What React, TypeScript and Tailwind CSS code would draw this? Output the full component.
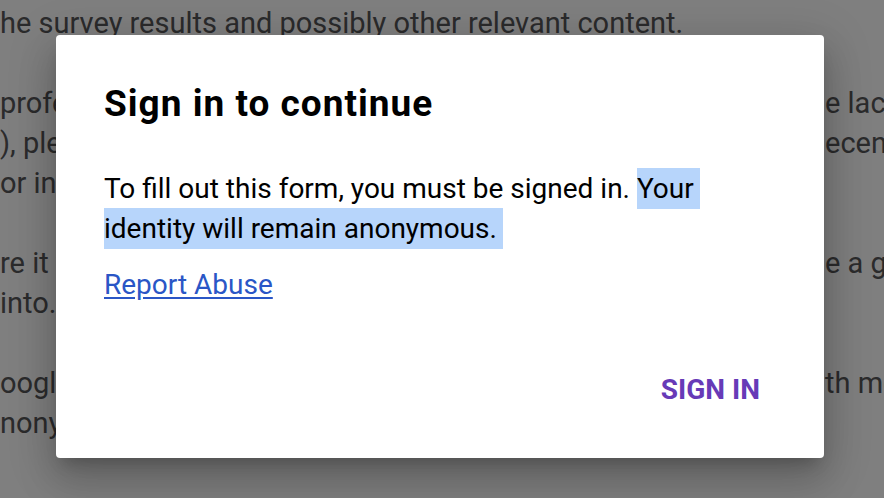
import React from "react";

const lines: { left: string; right?: string }[][] = [
  [{ left: "he survey results and possibly other relevant content." }],
  [
    { left: "professional background in survey design, we would like", right: "e lack of" },
    { left: "), please let us know so that we can take it into account", right: "ecent" },
    { left: "or in any related field." },
  ],
  [
    { left: "re it will be shared with the whole team so they can", right: "e a good" },
    { left: "into." },
  ],
  [
    { left: "oogle Forms does not collect your email address along", right: "th more" },
    { left: "nonymous." },
  ],
];

export default function App() {
  return (
    <div className="relative h-screen w-full overflow-hidden bg-white font-['Roboto',sans-serif]">
      {/* page behind the dialog */}
      <div className="flex flex-col gap-10 pt-[3px] text-[29px] leading-[40px] text-[#565658]">
        {lines.map((para, i) => (
          <div key={i}>
            {para.map((l, j) => (
              <div key={j} className="grid grid-cols-[825px_1fr] whitespace-nowrap">
                <span className="overflow-hidden">{l.left}</span>
                <span>{l.right}</span>
              </div>
            ))}
          </div>
        ))}
      </div>

      {/* scrim + dialog */}
      <div className="absolute inset-0 bg-black/50 pl-[56px] pt-[35px]">
        <div className="w-[768px] h-[423px] rounded bg-white px-12 pt-[49px] shadow-[0_11px_15px_-7px_rgba(0,0,0,0.2),0_24px_38px_3px_rgba(0,0,0,0.14),0_9px_46px_8px_rgba(0,0,0,0.12)] flex flex-col">
          <h2 className="text-[37px] leading-[40px] font-bold text-black tracking-[1px]">Sign in to continue</h2>
          <p className="mt-[45px] text-[28px] leading-[40px] text-black">
            To fill out this form, you must be signed in.{" "}
            <span className="bg-[#b7d5fb] py-[4px] pr-[6px] box-decoration-clone">
              Your identity will remain anonymous.
            </span>
          </p>
          <a href="#" className="mt-4 self-start text-[28px] leading-[40px] text-[#2a56c6] underline underline-offset-[3px]">
            Report Abuse
          </a>
          <div className="mt-[61px] flex justify-end pr-4">
            <button className="h-12 px-0 text-[28px] leading-[40px] font-bold text-[#673ab7] uppercase">
              Sign in
            </button>
          </div>
        </div>
      </div>
    </div>
  );
}
